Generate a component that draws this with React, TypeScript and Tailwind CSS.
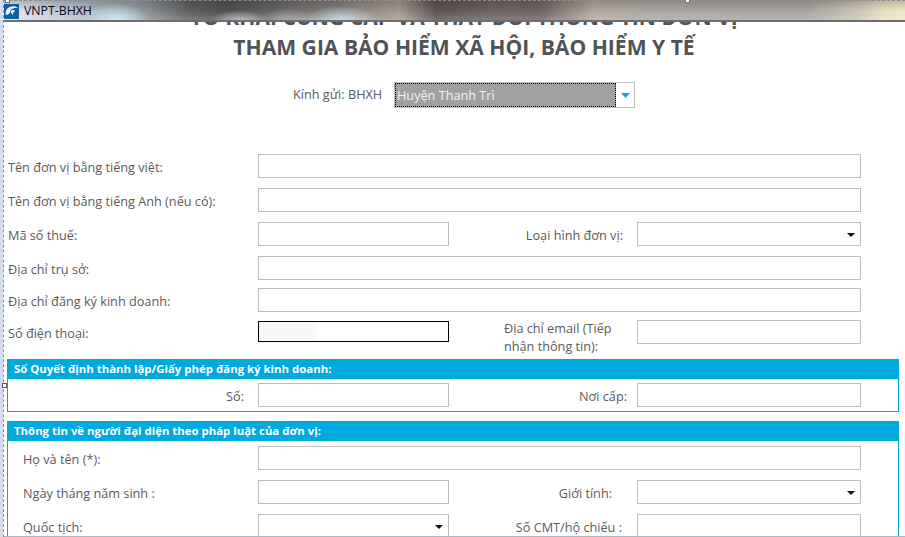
import { FC, ReactNode } from "react";

const inputClass = "h-6 shrink-0 border border-[#bdbdbd] bg-white";

const Caret: FC = () => (
  <svg width="8" height="4" viewBox="0 0 8 4" className="absolute right-[5px] top-[10px]">
    <path d="M0 0h8L4 4z" fill="#111" />
  </svg>
);

const Box: FC<{ width: string; caret?: boolean }> = ({ width, caret }) => (
  <div className={`relative ${inputClass} ${width}`}>{caret && <Caret />}</div>
);

const Row: FC<{ className: string; children: ReactNode }> = ({ className, children }) => (
  <div className={`flex items-center [&>span]:pt-[3px] ${className}`}>{children}</div>
);

const Section: FC<{ title: string; className: string; children: ReactNode }> = ({ title, className, children }) => (
  <section className={`ml-[3px] w-[892px] shrink-0 border border-t-0 border-[#00a9de] ${className}`}>
    <h2 className="h-5 bg-[#00a9de] pl-[6px] text-[11.4px] font-bold leading-[20px] text-white">{title}</h2>
    {children}
  </section>
);

export default function App() {
  return (
    <div className="flex h-[537px] w-[905px] overflow-hidden bg-white font-['Open_Sans','Noto_Sans',sans-serif] text-[12.7px] text-[#5a5a5a]">
      <div className="w-[3px] shrink-0 bg-[#d5dcec]" />
      <main className="relative flex h-full w-[902px] flex-col border-l border-dashed border-[#8f8f8f]">
        <header className="relative z-10 flex h-[22px] shrink-0 items-center gap-[5px] border-b-2 border-[#6e6e6e] pt-[2px] [background-image:radial-gradient(ellipse_40px_16px_at_337px_22px,rgba(205,232,245,0.95),transparent),radial-gradient(ellipse_30px_12px_at_236px_22px,rgba(225,215,230,0.8),transparent),radial-gradient(ellipse_32px_14px_at_285px_22px,rgba(225,220,215,0.5),transparent),radial-gradient(ellipse_34px_16px_at_112px_20px,rgba(205,240,250,0.95),transparent),linear-gradient(180deg,rgba(20,20,20,0.22),rgba(255,255,255,0)_55%,rgba(255,255,255,0.18)),linear-gradient(90deg,#e3e9f5_0,#bcc4d4_60px,#a9b4be_90px,#8f9aa2_135px,#5f5f60_185px,#505051_225px,#6d6a69_285px,#87807c_340px,#a79a90_395px,#5c5351_432px,#6c6361_490px,#6f6262_535px,#b3a89e_590px,#aca6a1_650px,#a8a3a0_800px,#c8c1b2_850px,#e9dfc0_880px,#f3e9c8_905px)]">
          <div className="flex h-[15px] w-[15px] shrink-0 items-center justify-center overflow-hidden bg-[#0f5fa8]">
            <svg width="15" height="15" viewBox="0 0 15 15">
              <path d="M2 11C0.5 6 5 1.5 11 2.5c1.4.2 2.3.9 3 1.8C10 3.300 6 5 6 8.500 5 10 3.300 11.500 2 11z" fill="#eaf3fb" />
              <path d="M6.500 7c1.500-1.300 3.500-1.300 4.500-.5-.5 1.500-1.500 2-2 2.300l-.5 2.700-1-2.500C7 8.500 6.500 8 6.500 7z" fill="#eaf3fb" />
            </svg>
          </div>
          <span className="text-[12.3px] text-[#0a0a12]">VNPT-BHXH</span>
        </header>
        <div className="absolute left-0 top-0 z-20 w-full border-t border-dashed border-[#8f8f8f]" />
        <div className="absolute left-[1px] top-0 z-20 h-[3px] w-[5px] border border-t-0 border-[#777] bg-white" />
        <div className="absolute left-[681px] top-0 z-20 h-[3px] w-[5px] border border-t-0 border-[#777] bg-white" />
        <div className="absolute -left-[2px] top-[383px] z-20 h-[5px] w-[5px] border border-[#555] bg-white" />

        <div className="ml-[19px] -mt-[20px] text-center text-[21.1px] font-bold leading-[30px] text-[#4f5358]">
          <h1>TỜ KHAI CUNG CẤP VÀ THAY ĐỔI THÔNG TIN ĐƠN VỊ</h1>
          <h1>THAM GIA BẢO HIỂM XÃ HỘI, BẢO HIỂM Y TẾ</h1>
        </div>

        <div className="ml-[289px] mt-[20px] flex h-[26px] shrink-0 items-center">
          <span className="w-[101px]">Kính gửi: BHXH</span>
          <div className="flex h-[26px] w-[241px] border border-[#bdbdbd]">
            <div className="flex flex-1 items-center border border-dotted border-black bg-[#a0a0a0] pl-[1px] pt-px text-[#f4f4f4]">Huyện Thanh Trì</div>
            <div className="flex w-[18px] items-center justify-center">
              <svg width="9" height="5" viewBox="0 0 9 5"><path d="M0 0h9L4.500 5z" fill="#1aa5d8" /></svg>
            </div>
          </div>
        </div>

        <div className="ml-[4px] mt-[46px] flex shrink-0 flex-col">
          <Row className="h-6">
            <span className="w-[250px]">Tên đơn vị bằng tiếng việt:</span>
            <Box width="w-[603px]" />
          </Row>
          <Row className="mt-[10px] h-6">
            <span className="w-[250px]">Tên đơn vị bằng tiếng Anh (nếu có):</span>
            <Box width="w-[603px]" />
          </Row>
          <Row className="mt-[10px] h-6">
            <span className="w-[250px]">Mã số thuế:</span>
            <Box width="w-[191px]" />
            <span className="w-[174px] text-right">Loại hình đơn vị:</span>
            <Box width="ml-[14px] w-[224px]" caret />
          </Row>
          <Row className="mt-[10px] h-6">
            <span className="w-[250px]">Địa chỉ trụ sở:</span>
            <Box width="w-[603px]" />
          </Row>
          <Row className="mt-[8px] h-6">
            <span className="w-[250px]">Địa chỉ đăng ký kinh doanh:</span>
            <Box width="w-[603px]" />
          </Row>
          <div className="mt-[8px] flex h-[39px] items-start">
            <span className="mt-[4px] w-[250px]">Số điện thoại:</span>
            <div className="mt-px h-[21px] w-[191px] border border-black bg-[linear-gradient(90deg,#f8f8f8_0,#f8f8f8_54px,#fff_60px)]" />
            <span className="-mt-px ml-[55px] w-[133px] leading-[18px]">Địa chỉ email (Tiếp nhận thông tin):</span>
            <Box width="w-[224px]" />
          </div>
        </div>

        <Section title="Số Quyết định thành lập/Giấy phép đăng ký kinh doanh:" className="h-[53px]">
          <Row className="mt-[4px]">
            <span className="w-[236px] text-right">Số:</span>
            <Box width="ml-[14px] w-[191px]" />
            <span className="w-[178px] text-right">Nơi cấp:</span>
            <Box width="ml-[10px] w-[224px]" />
          </Row>
        </Section>

        <Section title="Thông tin về người đại diện theo pháp luật của đơn vị:" className="mt-[9px] h-[140px]">
          <Row className="mt-[5px] h-6">
            <span className="w-[250px] pl-[15px]">Họ và tên (*):</span>
            <Box width="w-[603px]" />
          </Row>
          <Row className="mt-[10px] h-6">
            <span className="w-[250px] pl-[15px]">Ngày tháng năm sinh :</span>
            <Box width="w-[191px]" />
            <span className="w-[163px] text-right">Giới tính:</span>
            <Box width="ml-[25px] w-[224px]" caret />
          </Row>
          <Row className="mt-[10px] h-6">
            <span className="w-[250px] pl-[15px]">Quốc tịch:</span>
            <Box width="w-[191px]" caret />
            <span className="w-[173px] text-right">Số CMT/hộ chiếu :</span>
            <Box width="ml-[15px] w-[224px]" />
          </Row>
        </Section>
        <div className="absolute bottom-0 left-0 z-10 h-px w-full bg-[#a9b8c6]" />
      </main>
    </div>
  );
}
